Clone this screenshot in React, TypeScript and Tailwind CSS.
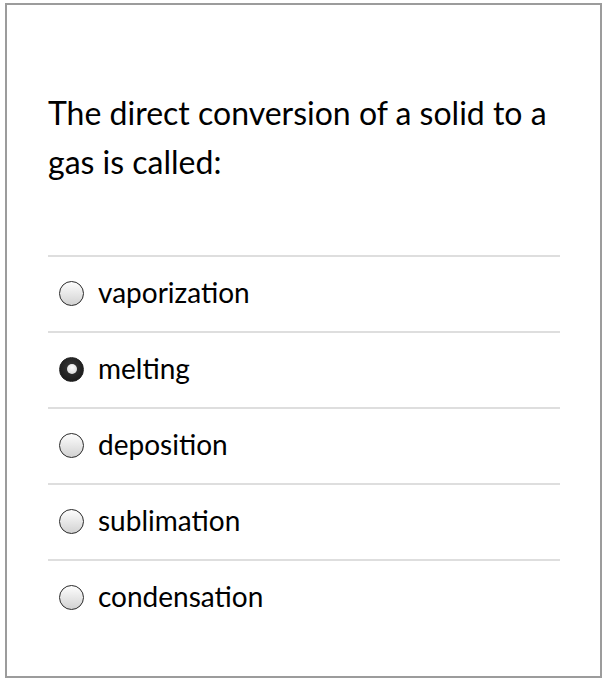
import React from 'react'

const options = ['vaporization', 'melting', 'deposition', 'sublimation', 'condensation']

function Radio({ checked }: { checked: boolean }) {
  if (checked) {
    return (
      <span className="flex h-[25px] w-[25px] shrink-0 items-center justify-center rounded-full bg-[radial-gradient(circle_at_50%_40%,#3a3a3a,#111)] border border-[#222]">
        <span className="h-[10px] w-[10px] rounded-full bg-[radial-gradient(circle_at_50%_35%,#fff,#cfcfcf)]" />
      </span>
    )
  }
  return (
    <span className="h-[25px] w-[25px] shrink-0 rounded-full border-[1.5px] border-[#2a2a2a] bg-[linear-gradient(180deg,#fdfdfd,#d2d2d2)]" />
  )
}

export default function App() {
  const [selected, setSelected] = React.useState('melting')

  return (
    <div className="h-[682px] w-[607px] bg-white pt-[3px] font-['Lato','Liberation_Sans',sans-serif] text-black">
      <div className="ml-[5px] mr-[5px] h-[675px] border-2 border-[#9c9c9c] px-[41px]">
        <p className="mt-[83px] text-[32px] leading-[49px]">
          The direct conversion of a solid to a gas is called:
        </p>
        <div className="mt-[69px] mr-[-1px]">
          {options.map((opt) => (
            <label
              key={opt}
              className="flex h-[76px] cursor-pointer items-center gap-[14px] border-t-2 border-[#dedede] pb-[2px] pl-[11px]"
              onClick={() => setSelected(opt)}
            >
              <Radio checked={selected === opt} />
              <span className="mt-[-3px] text-[28px] leading-none">{opt}</span>
            </label>
          ))}
        </div>
      </div>
    </div>
  )
}
